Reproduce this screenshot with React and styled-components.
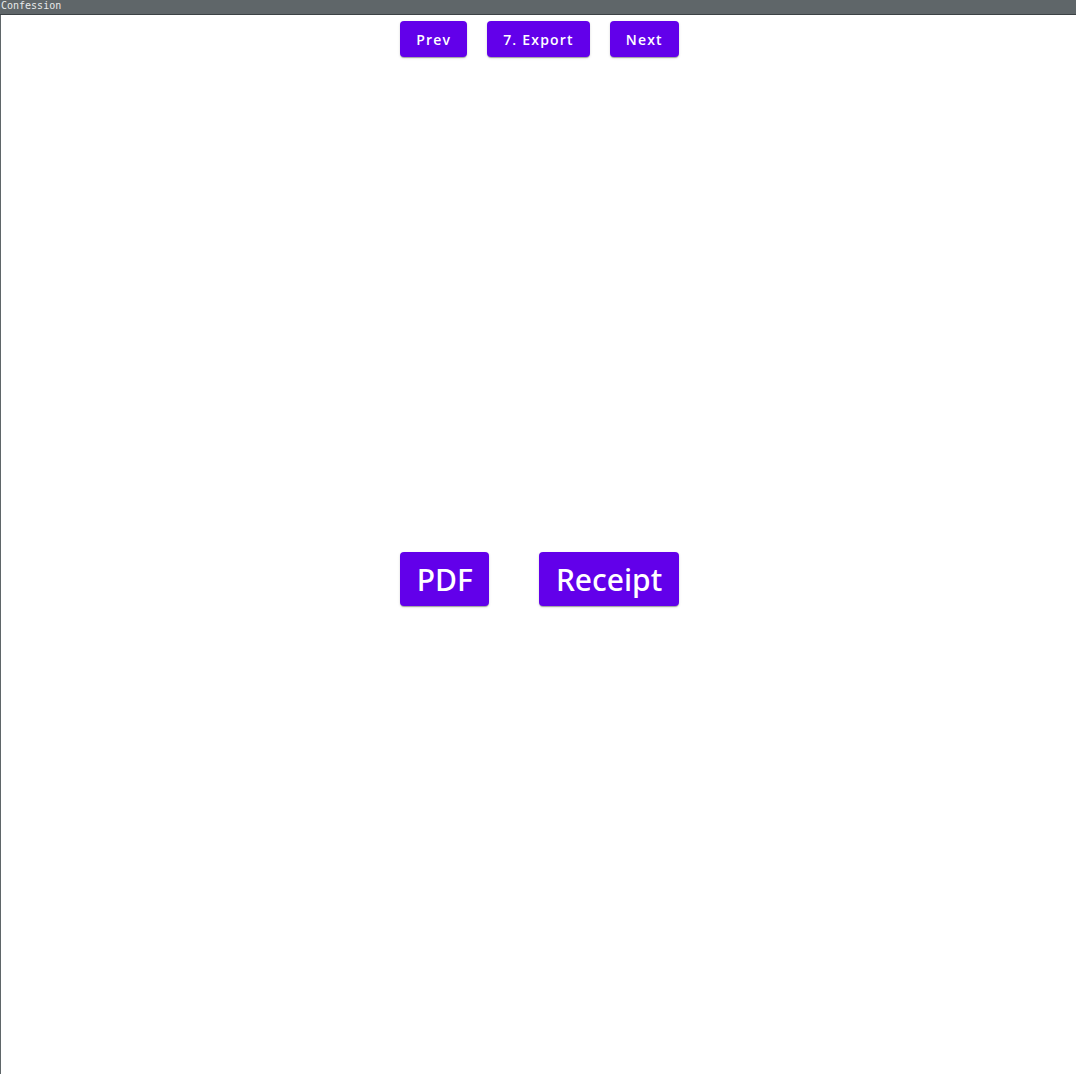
import React from "react";
import styled, { createGlobalStyle } from "styled-components";

const GlobalStyle = createGlobalStyle`
  html, body {
    margin: 0;
    padding: 0;
    height: 100%;
    background: #ffffff;
  }
  #root {
    height: 100%;
  }
`;

const Window = styled.div`
  height: 100vh;
  display: flex;
  flex-direction: column;
  box-sizing: border-box;
  border-left: 1px solid #5f6669;
  font-family: "Open Sans", "Liberation Sans", sans-serif;
`;

const TitleBar = styled.div`
  height: 14px;
  flex-shrink: 0;
  margin-left: -1px;
  background: #5f6669;
  border-bottom: 1px solid #3c4245;
  color: #e8eaeb;
  font-family: "DejaVu Sans Mono", monospace;
  font-size: 10px;
  line-height: 12px;
  padding-left: 1px;
`;

const Nav = styled.div`
  display: flex;
  justify-content: center;
  gap: 20px;
  padding: 6px 0 0 2px;
`;

const Button = styled.button`
  height: ${(p) => (p.$big ? "54px" : "36px")};
  min-width: 64px;
  padding: ${(p) => (p.$big ? "0 16.5px" : "0 16px")};
  border: none;
  border-radius: 4px;
  background: #6200ea;
  color: #ffffff;
  font-family: ${(p) => (p.$big ? '"Noto Sans"' : '"Open Sans"')}, "Liberation Sans", sans-serif;
  font-size: ${(p) => (p.$big ? "30px" : "14px")};
  font-weight: ${(p) => (p.$big ? 500 : 600)};
  letter-spacing: ${(p) => (p.$big ? "0" : "1.2px")};
  box-shadow: 0 2px 1px -1px rgba(0, 0, 0, 0.2), 0 1px 1px 0 rgba(0, 0, 0, 0.14),
    0 1px 3px 0 rgba(0, 0, 0, 0.12);
  cursor: pointer;
`;

const Stage = styled.div`
  flex: 1;
  display: flex;
  justify-content: center;
  align-items: center;
  gap: 50px;
  padding: 27px 0 0 2px;
`;

const App = () => {
  return (
    <>
      <GlobalStyle />
      <Window>
        <TitleBar>Confession</TitleBar>
        <Nav>
          <Button>Prev</Button>
          <Button>7. Export</Button>
          <Button>Next</Button>
        </Nav>
        <Stage>
          <Button $big>PDF</Button>
          <Button $big>Receipt</Button>
        </Stage>
      </Window>
    </>
  );
};

export default App;
